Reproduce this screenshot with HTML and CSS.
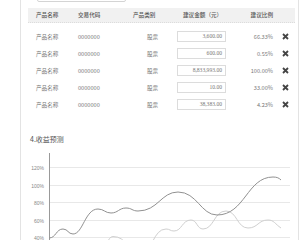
FILE: index.html
```html
<!DOCTYPE html>
<html>
    <head>
        <title>收益预测</title>
        <link rel="stylesheet" href="styles.css">
    </head>
    <body>
    <div class="panel">
        <div class="search"></div>

        <div class="plan">
            <div class="row head">
                <span class="c1">产品名称</span>
                <span class="c2">交易代码</span>
                <span class="c3">产品类别</span>
                <span class="c4">建议金额（元）</span>
                <span class="c5">建议比例</span>
                <span class="c6"></span>
            </div>
            <div class="rows">
                <div class="row">
                    <span class="c1">产品名称</span>
                    <span class="c2">0000000</span>
                    <span class="c3">股票</span>
                    <span class="c4"><span class="amount">3,600.00</span></span>
                    <span class="c5">66.33%</span>
                    <span class="c6"><svg class="del" width="7" height="7" viewBox="0 0 7 7"><path d="M1 1 L6 6 M6 1 L1 6" /></svg></span>
                </div>
                <div class="row">
                    <span class="c1">产品名称</span>
                    <span class="c2">0000000</span>
                    <span class="c3">股票</span>
                    <span class="c4"><span class="amount">600.00</span></span>
                    <span class="c5">0.55%</span>
                    <span class="c6"><svg class="del" width="7" height="7" viewBox="0 0 7 7"><path d="M1 1 L6 6 M6 1 L1 6" /></svg></span>
                </div>
                <div class="row">
                    <span class="c1">产品名称</span>
                    <span class="c2">0000000</span>
                    <span class="c3">股票</span>
                    <span class="c4"><span class="amount">8,833,993.00</span></span>
                    <span class="c5">100.00%</span>
                    <span class="c6"><svg class="del" width="7" height="7" viewBox="0 0 7 7"><path d="M1 1 L6 6 M6 1 L1 6" /></svg></span>
                </div>
                <div class="row">
                    <span class="c1">产品名称</span>
                    <span class="c2">0000000</span>
                    <span class="c3">股票</span>
                    <span class="c4"><span class="amount">10.00</span></span>
                    <span class="c5">33.00%</span>
                    <span class="c6"><svg class="del" width="7" height="7" viewBox="0 0 7 7"><path d="M1 1 L6 6 M6 1 L1 6" /></svg></span>
                </div>
                <div class="row">
                    <span class="c1">产品名称</span>
                    <span class="c2">0000000</span>
                    <span class="c3">股票</span>
                    <span class="c4"><span class="amount">38,383.00</span></span>
                    <span class="c5">4.23%</span>
                    <span class="c6"><svg class="del" width="7" height="7" viewBox="0 0 7 7"><path d="M1 1 L6 6 M6 1 L1 6" /></svg></span>
                </div>
            </div>
        </div>

        <h2 class="title">4.收益预测</h2>

        <!-- gráfico: coordenadas da página no viewBox -->
        <svg class="chart" width="278" height="92" viewBox="20 148 278 92">
            <g class="grid">
                <line x1="49" y1="167.5" x2="289" y2="167.5" />
                <line x1="49" y1="185.5" x2="289" y2="185.5" />
                <line x1="49" y1="202.5" x2="289" y2="202.5" />
                <line x1="49" y1="220.5" x2="289" y2="220.5" />
                <line x1="49" y1="237.5" x2="289" y2="237.5" />
            </g>
            <line class="axis" x1="48.5" y1="153" x2="48.5" y2="240" />
            <g class="labels">
                <text x="43" y="169.5">120%</text>
                <text x="43" y="187.5">100%</text>
                <text x="43" y="204.5">80%</text>
                <text x="43" y="222.5">60%</text>
                <text x="43" y="239.5">40%</text>
            </g>
            <path class="line2" d="M100 250 C106 250 106 236.5 112 236.5 C126 236.5 126 252 140 252 C152 252 152 229 165 229 C169 229 169 231 173 231 C181 231 181 220 190 220 C196 220 196 229 202 229 C213 229 213 211 225 211 C236 211 236 228 247 228 C257 228 257 220 267 220 C273 220 274 224 280 228" />
            <path class="line1" d="M48 238 C55 238 55 229 62 229 C67 229 67 234 72 234 C82 234 84 209 97 209 C103 209 104 213 110 213 C117 213 118 208 125 208 C131 208 131 211 137 211 C157 211 160 192 177 192 C196 192 200 215 216 215 C244 215 246 177 272 177 C276 177 278 178 280 180" />
        </svg>
    </div>
    </body>
</html>
```

FILE: styles.css
```css
body{
    margin: 0;
    background-color: white;
    font-family: "Noto Sans CJK SC", "Liberation Sans", sans-serif;
    overflow: hidden;
}

.panel{
    margin-left: 20px;
    width: 277px;
    height: 240px;
    border-left: 1px solid #e3e3e3;
    border-right: 1px solid #e3e3e3;
    overflow: hidden;
}

.search{
    height: 10px;
    width: 87px;
    margin: -10px 0 0 16px;
    border: 1px solid #d4d4d4;
    border-radius: 2px;
}

.plan{
    margin: 6px 0 0 7px;
    width: 267px;
    font-size: 5.6px;
    color: #777;
}

.row{
    display: flex;
    align-items: center;
    height: 17px;
}

.row > span{
    flex: none;
    white-space: nowrap;
}

.head{
    height: 15px;
    background-color: #f1f1f1;
    border-bottom: 1px dotted #dcdcdc;
    box-sizing: border-box;
    color: #555;
    font-weight: 500;
}

.rows{
    padding-top: 5px;
}

.c1{
    width: 42px;
    padding-left: 8px;
}
.c2{
    width: 50px;
}
.c3{
    width: 42px;
    padding-left: 5px;
}
.rows .c3{
    width: 28px;
    padding-left: 19px;
}
.c4{
    width: 62px;
    padding-left: 8px;
}
.rows .c4{
    width: 68px;
    padding-left: 2px;
}
.c5{
    width: 28px;
    padding-right: 2px;
    text-align: right;
}
.c6{
    width: 20px;
    display: flex;
    justify-content: center;
}

.amount{
    display: block;
    box-sizing: border-box;
    width: 49px;
    height: 11px;
    line-height: 9px;
    padding: 0 3px;
    border: 1px solid #dcdcdc;
    font-family: "Liberation Serif", serif;
    font-size: 5.6px;
    color: #777;
    text-align: right;
}

.del{
    display: block;
}
.del path{
    fill: none;
    stroke: #444;
    stroke-width: 1.8;
}

.title{
    margin: 21px 0 4px 9px;
    height: 10px;
    line-height: 10px;
    font-size: 7px;
    font-weight: normal;
    color: #555;
}

.chart{
    display: block;
}

.grid line{
    stroke: #e8e8e8;
    stroke-width: 1;
}

.axis{
    stroke: #999;
    stroke-width: 1;
}

.labels text{
    font-family: "Liberation Sans", sans-serif;
    font-size: 5px;
    fill: #888;
    text-anchor: end;
}

.line1{
    fill: none;
    stroke: #919191;
    stroke-width: 1;
}

.line2{
    fill: none;
    stroke: #d0d0d0;
    stroke-width: 1;
}
```
